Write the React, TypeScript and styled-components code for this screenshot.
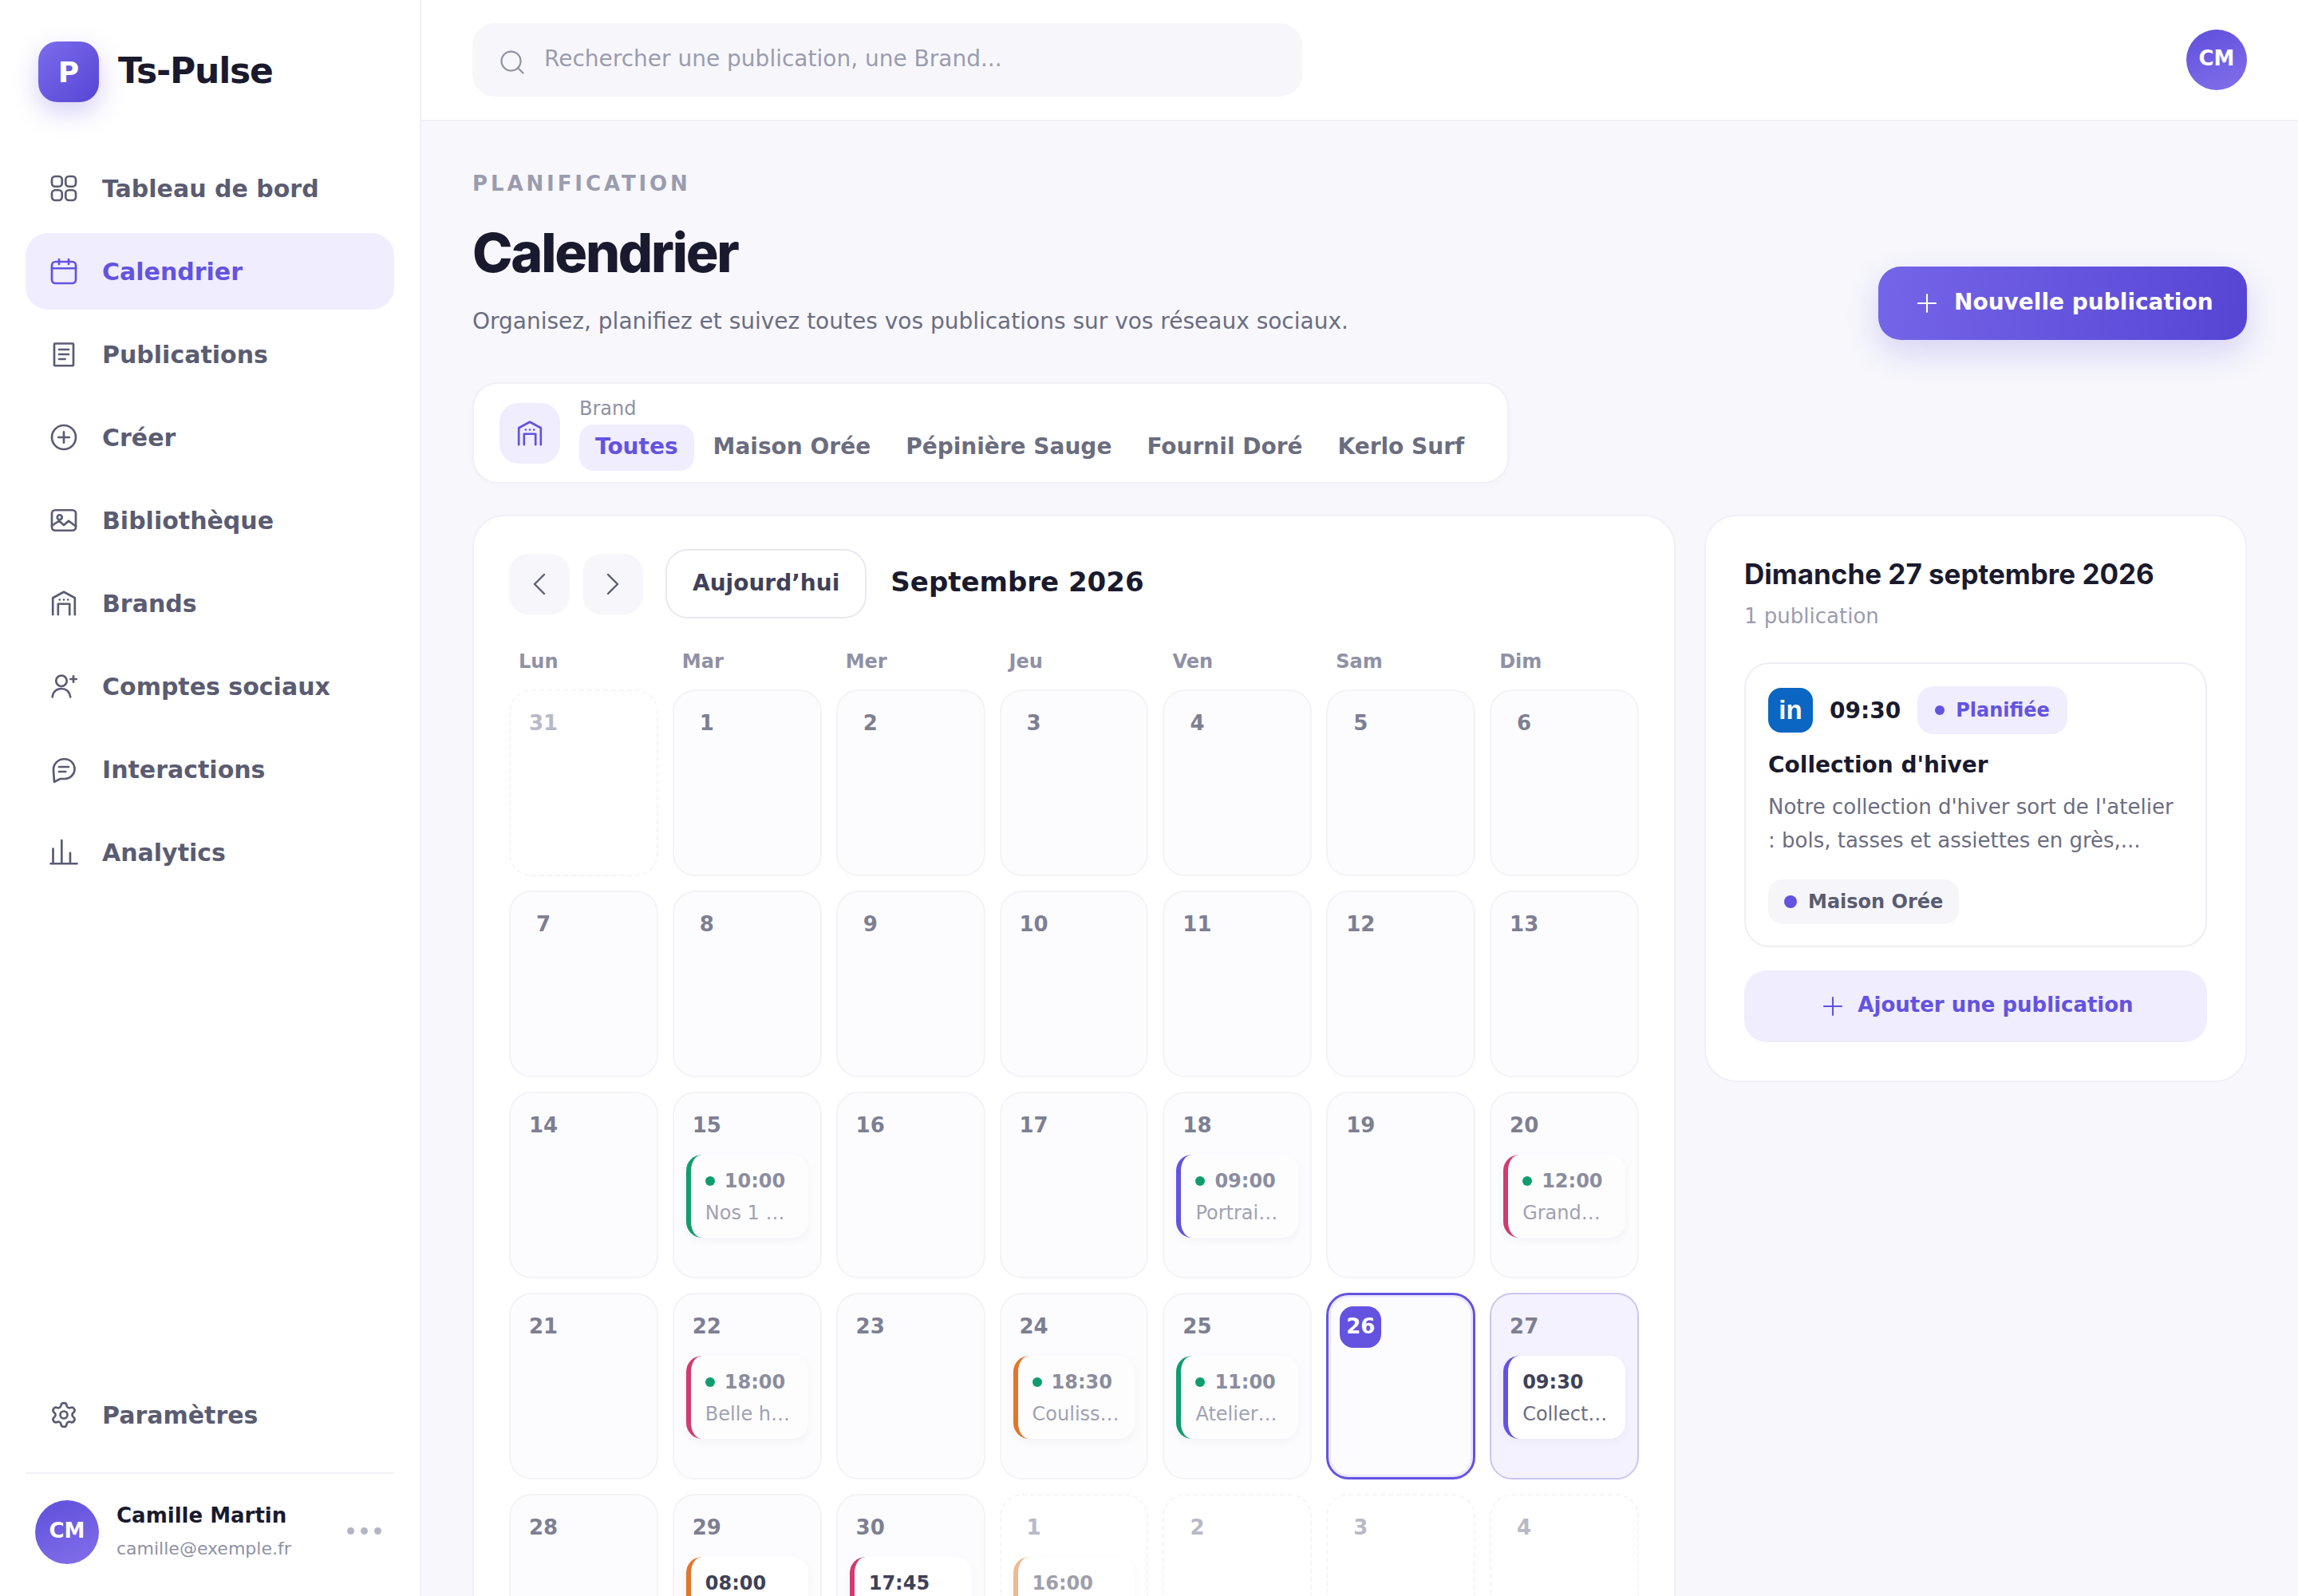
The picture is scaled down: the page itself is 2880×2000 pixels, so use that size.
import { ReactNode } from "react";
import styled, { createGlobalStyle } from "styled-components";
import { ChevronLeft, ChevronRight, Plus, Search, Settings } from "lucide-react";

const GlobalStyle = createGlobalStyle`
  html, body { margin: 0; padding: 0; background: #f7f7fc; }
  body { font-family: "DejaVu Sans", sans-serif; color: #1a1a2e; }
  * { box-sizing: border-box; }
`;

const Shell = styled.div`
  display: flex;
  width: 2880px;
  height: 2000px;
  overflow: hidden;
`;

const Sidebar = styled.aside`
  display: flex;
  flex-direction: column;
  flex: 0 0 528px;
  height: 2000px;
  padding: 52px 32px 40px;
  background: #fff;
  border-right: 2px solid #f0f0f7;
`;

const Brand = styled.div`
  display: flex;
  align-items: center;
  gap: 24px;
  padding-left: 16px;
  height: 76px;
  margin-bottom: 60px;
`;

const LogoMark = styled.div`
  display: flex;
  align-items: center;
  justify-content: center;
  width: 76px;
  height: 76px;
  border-radius: 24px;
  background: linear-gradient(135deg, #7c6cec, #5645d4);
  box-shadow: 0 12px 32px rgba(99, 83, 224, 0.28);
  color: #fff;
  font-size: 36px;
  font-weight: 700;
`;

const BrandName = styled.span`
  font-size: 44px;
  font-weight: 700;
  letter-spacing: -1.2px;
  margin-top: -3px;
`;

const NavList = styled.nav`
  display: flex;
  flex-direction: column;
  gap: 8px;
  flex: 1;
`;

const NavItem = styled.a<{ $active?: boolean }>`
  display: flex;
  align-items: center;
  gap: 30px;
  height: 96px;
  padding-left: 30px;
  border-radius: 28px;
  font-size: 30px;
  font-weight: 700;
  color: ${(p) => (p.$active ? "#6353e0" : "#5a5c72")};
  background: ${(p) => (p.$active ? "#f0edfe" : "transparent")};
`;

const Divider = styled.div`
  height: 2px;
  margin: 24px 0 33px;
  background: #f0f0f7;
`;

const UserRow = styled.div`
  display: flex;
  align-items: center;
  padding: 0 16px 0 12px;
  gap: 22px;
`;

const Avatar = styled.div<{ $size: number }>`
  display: flex;
  align-items: center;
  justify-content: center;
  flex: none;
  width: ${(p) => p.$size}px;
  height: ${(p) => p.$size}px;
  padding-bottom: 4px;
  border-radius: 50%;
  background: linear-gradient(160deg, #5f4fdb, #8270ea);
  color: #fff;
  font-size: 26px;
  font-weight: 700;
`;

const UserText = styled.div`
  display: flex;
  flex-direction: column;
  gap: 6px;
  flex: 1;
`;

const UserName = styled.div`
  font-size: 26px;
  font-weight: 700;
  line-height: 36px;
`;

const UserMail = styled.div`
  font-size: 22px;
  line-height: 36px;
  color: #8f91a5;
`;

const Dots = styled.div`
  display: flex;
  gap: 8px;
  margin-top: -4px;
  span {
    width: 9px;
    height: 9px;
    border-radius: 50%;
    background: #b4b5c4;
  }
`;

const Column = styled.div`
  display: flex;
  flex-direction: column;
  flex: 1;
  min-width: 0;
`;

const Topbar = styled.header`
  display: flex;
  align-items: center;
  justify-content: space-between;
  flex: none;
  height: 152px;
  padding: 0 64px;
  background: #fff;
  border-bottom: 2px solid #f0f0f7;
`;

const SearchBox = styled.label`
  display: flex;
  align-items: center;
  gap: 22px;
  width: 1040px;
  height: 92px;
  padding-left: 32px;
  border-radius: 28px;
  background: #f7f7fb;
  color: #8f91a5;
  svg {
    margin-top: 6px;
  }
`;

const SearchInput = styled.input`
  flex: 1;
  border: 0;
  outline: 0;
  padding: 0;
  background: transparent;
  font-family: inherit;
  font-size: 28px;
  margin-top: -4px;
  &::placeholder {
    color: #9a9cae;
    opacity: 1;
  }
`;

const Main = styled.main`
  padding: 60px 64px 0;
`;

const Head = styled.div`
  display: flex;
  align-items: flex-end;
  justify-content: space-between;
`;

const Eyebrow = styled.div`
  font-size: 26px;
  line-height: 36px;
  font-weight: 700;
  letter-spacing: 3.9px;
  color: #9a9cae;
`;

const Title = styled.h1`
  margin: 28px 0 24px;
  font-family: Inter, sans-serif;
  font-size: 68px;
  line-height: 80px;
  font-weight: 800;
  letter-spacing: -2.2px;
`;

const Subtitle = styled.p`
  margin: 0;
  font-size: 28px;
  line-height: 46px;
  color: #6b6d80;
`;

const PrimaryButton = styled.button`
  display: flex;
  align-items: center;
  gap: 15px;
  width: 462px;
  height: 92px;
  padding: 0 0 0 42px;
  border: 0;
  border-radius: 28px;
  background: linear-gradient(100deg, #7565e8, #5645d4);
  box-shadow: 0 16px 40px rgba(99, 83, 224, 0.22);
  color: #fff;
  font-family: inherit;
  font-size: 28px;
  font-weight: 700;
  span {
    margin-top: -4px;
  }
`;

const FilterBar = styled.div`
  display: inline-flex;
  align-items: center;
  gap: 24px;
  margin-top: 53px;
  padding: 15px 34px 14px 32px;
  background: #fff;
  border: 2px solid #f0f0f7;
  border-radius: 32px;
  box-shadow: 0 2px 8px rgba(26, 26, 46, 0.02);
`;

const FilterIcon = styled.div`
  display: flex;
  align-items: center;
  justify-content: center;
  width: 76px;
  height: 76px;
  border-radius: 24px;
  background: #f0edfe;
  color: #6353e0;
`;

const FilterLabel = styled.div`
  font-size: 24px;
  line-height: 32px;
  color: #8f91a5;
  margin-bottom: 4px;
`;

const FilterTabs = styled.div`
  display: flex;
  gap: 4px;
`;

const FilterTab = styled.span<{ $active?: boolean }>`
  display: flex;
  align-items: center;
  height: 58px;
  padding: 0 20px 3px;
  border-radius: 18px;
  font-size: 28px;
  font-weight: 700;
  color: ${(p) => (p.$active ? "#6353e0" : "#6b6d80")};
  background: ${(p) => (p.$active ? "#f0edfe" : "transparent")};
`;

const Content = styled.div`
  display: grid;
  grid-template-columns: 1508px 680px;
  gap: 36px;
  align-items: start;
  margin-top: 39px;
`;

const CalendarCard = styled.section`
  height: 1500px;
  padding: 41px 44px 39px;
  background: #fff;
  border: 2px solid #f0f0f7;
  border-radius: 40px;
`;

const CalendarToolbar = styled.div`
  display: flex;
  align-items: center;
  gap: 16px;
  height: 87px;
`;

const NavButton = styled.button`
  display: flex;
  align-items: center;
  justify-content: center;
  width: 76px;
  height: 76px;
  padding: 0;
  border: 0;
  border-radius: 24px;
  background: #f7f7fb;
  color: #5a5c72;
`;

const TodayButton = styled.button`
  height: 87px;
  margin-left: 12px;
  padding: 0 32px 3px;
  border: 2px solid #e8e8f0;
  border-radius: 28px;
  background: #fff;
  color: #3f4158;
  font-family: inherit;
  font-size: 28px;
  font-weight: 700;
`;

const MonthTitle = styled.h2`
  margin: -6px 0 0 14px;
  font-size: 34px;
  font-weight: 700;
`;

const WeekGrid = styled.div`
  display: grid;
  grid-template-columns: repeat(7, minmax(0, 1fr));
  column-gap: 18px;
  margin: 36px 0 17px;
`;

const WeekDay = styled.div`
  padding-left: 12px;
  font-size: 24px;
  line-height: 36px;
  font-weight: 700;
  color: #8f91a5;
`;

const DayGrid = styled.div`
  display: grid;
  grid-template-columns: repeat(7, minmax(0, 1fr));
  grid-auto-rows: 234px;
  gap: 18px;
`;

type CellKind = "normal" | "outside" | "today" | "selected";

const cellBorder: Record<CellKind, string> = {
  normal: "2px solid #f3f3f8",
  outside: "2px dashed #f6f6f9",
  today: "3px solid #6353e0",
  selected: "2px solid #cbc5f2",
};

const cellBg: Record<CellKind, string> = {
  normal: "#fcfcfe",
  outside: "#fff",
  today: "#fcfcfe",
  selected: "#f4f2fe",
};

const Cell = styled.div<{ $kind: CellKind }>`
  min-width: 0;
  padding: ${(p) => (p.$kind === "today" ? "14px" : "15px")};
  border: ${(p) => cellBorder[p.$kind]};
  border-radius: 28px;
  background: ${(p) => cellBg[p.$kind]};
  box-shadow: ${(p) =>
    p.$kind === "today" ? "inset 0 0 0 3px #ece9fc" : "none"};
`;

const DayNumber = styled.div<{ $kind: CellKind }>`
  display: flex;
  align-items: center;
  justify-content: center;
  width: 52px;
  height: 52px;
  margin-bottom: 10px;
  padding-bottom: 2px;
  border-radius: 17px;
  font-size: 26px;
  font-weight: 700;
  color: ${(p) =>
    p.$kind === "today" ? "#fff" : p.$kind === "outside" ? "#b8b9c7" : "#7d7f93"};
  background: ${(p) => (p.$kind === "today" ? "#6353e0" : "transparent")};
`;

type EventState = "done" | "planned" | "faded" | "active";

const EventCard = styled.div<{ $color: string; $state: EventState }>`
  height: 104px;
  padding: 13px 18px 11px;
  border-left: 6px solid ${(p) => p.$color};
  border-radius: 20px;
  background: ${(p) => (p.$state === "done" ? "#fdfdfe" : "#fff")};
  box-shadow: 0 4px 12px rgba(26, 26, 46, 0.04);
  opacity: ${(p) => (p.$state === "faded" ? 0.5 : 1)};
`;

const EventTime = styled.div<{ $state: EventState }>`
  display: flex;
  align-items: center;
  gap: 12px;
  font-size: 24px;
  line-height: 40px;
  font-weight: 700;
  color: ${(p) => (p.$state === "done" ? "#8b8d9f" : "#3f4158")};
`;

const GreenDot = styled.span`
  width: 12px;
  height: 12px;
  border-radius: 50%;
  background: #0f9d6e;
`;

const EventTitle = styled.div<{ $state: EventState }>`
  font-size: 24px;
  line-height: 40px;
  color: ${(p) => (p.$state === "done" ? "#a0a2b2" : "#6b6d80")};
  white-space: nowrap;
  overflow: hidden;
  text-overflow: ellipsis;
`;

const SidePanel = styled.aside`
  padding: 50px 48px 48px;
  background: #fff;
  border: 2px solid #f0f0f7;
  border-radius: 40px;
`;

const PanelTitle = styled.h3`
  margin: 0;
  font-family: Inter, sans-serif;
  font-size: 35px;
  line-height: 44px;
  font-weight: 700;
`;

const PanelCount = styled.div`
  margin: 11px 0 38px;
  font-size: 26px;
  line-height: 40px;
  color: #9a9cae;
`;

const PostCard = styled.article`
  padding: 28px 28px 27px;
  border: 2px solid #eeeef4;
  border-radius: 32px;
`;

const PostMeta = styled.div`
  display: flex;
  align-items: center;
  height: 60px;
`;

const LinkedinBadge = styled.div`
  display: flex;
  align-items: center;
  justify-content: center;
  width: 56px;
  height: 56px;
  border-radius: 16px;
  background: #0a66c2;
  color: #fff;
  font-family: "Liberation Sans", sans-serif;
  font-size: 33px;
  font-weight: 700;
`;

const PostTime = styled.span`
  margin: 0 21px;
  font-size: 28px;
  font-weight: 700;
`;

const StatusPill = styled.span`
  display: flex;
  align-items: center;
  gap: 14px;
  height: 60px;
  padding: 0 22px;
  border-radius: 20px;
  background: #f0edfe;
  color: #6353e0;
  font-size: 24px;
  font-weight: 700;
  &::before {
    content: "";
    width: 12px;
    height: 12px;
    border-radius: 50%;
    background: #6353e0;
  }
`;

const PostTitle = styled.div`
  margin-top: 17px;
  font-size: 28px;
  line-height: 44px;
  font-weight: 700;
`;

const PostBody = styled.p`
  margin: 9px 0 28px;
  font-size: 26px;
  line-height: 42px;
  color: #6b6d80;
`;

const BrandChip = styled.div`
  display: flex;
  align-items: center;
  gap: 14px;
  width: fit-content;
  height: 56px;
  padding: 0 20px;
  border-radius: 18px;
  background: #f6f6fa;
  color: #5a5c72;
  font-size: 24px;
  font-weight: 700;
  &::before {
    content: "";
    width: 16px;
    height: 16px;
    border-radius: 50%;
    background: #6353e0;
  }
`;

const AddButton = styled.button`
  display: flex;
  align-items: center;
  justify-content: center;
  gap: 12px;
  width: 100%;
  height: 90px;
  margin-top: 29px;
  border: 0;
  border-radius: 28px;
  background: #f0edfe;
  color: #6353e0;
  font-family: inherit;
  font-size: 26px;
  font-weight: 700;
  span {
    margin-top: -4px;
  }
`;

function Icon({ children, size = 36 }: { children: ReactNode; size?: number }) {
  return (
    <svg
      width={size}
      height={size}
      viewBox="0 0 24 24"
      fill="none"
      stroke="currentColor"
      strokeWidth="1.8"
      strokeLinecap="round"
      strokeLinejoin="round"
    >
      {children}
    </svg>
  );
}

const GridIcon = () => (
  <Icon>
    <rect x="2" y="2" width="8.500" height="8.500" rx="2.800" />
    <rect x="13.500" y="2" width="8.500" height="8.500" rx="2.800" />
    <rect x="2" y="13.500" width="8.500" height="8.500" rx="2.800" />
    <rect x="13.500" y="13.500" width="8.500" height="8.500" rx="2.800" />
  </Icon>
);

const CalendarIcon = () => (
  <Icon>
    <rect x="2" y="4" width="20" height="18" rx="3" />
    <path d="M2 9.500h20M8 2v4M16 2v4" />
  </Icon>
);

const DocIcon = () => (
  <Icon>
    <rect x="4" y="3" width="16" height="18.500" rx="0.600" />
    <path d="M8 8h8M8 12h8M8 16h5" />
  </Icon>
);

const PlusCircleIcon = () => (
  <Icon>
    <circle cx="12" cy="12" r="10" />
    <path d="M12 7.500v9M7.500 12h9" />
  </Icon>
);

const ImageIcon = () => (
  <Icon>
    <rect x="2" y="3.500" width="20" height="17" rx="2.800" />
    <circle cx="8.500" cy="9.500" r="2" />
    <path d="M2 16.500 8 12.500l4 3.500 4-3.500 6 4.500" />
  </Icon>
);

const StoreIcon = ({ size = 36 }: { size?: number }) => (
  <Icon size={size}>
    <path d="M2.800 21.500V7.500L12 2.500l9.200 5V21.500" />
    <path d="M7.200 21.500v-9h9.600v9" />
    <path d="M8.500 9h.01M12 9h.01M15.500 9h.01" />
  </Icon>
);

const UserPlusIcon = () => (
  <Icon>
    <circle cx="10" cy="7.500" r="4.500" />
    <path d="M2.500 21c.3-4.200 3.200-7 7.500-7s6.700 2.800 7.500 7" />
    <path d="M20 3.500v5M17.500 6h5" />
  </Icon>
);

const ChatIcon = () => (
  <Icon>
    <path d="M3.300 12.500a8.800 8.800 0 0 1 9-9h.5c4.500 0 8.200 3.700 8.200 8.200s-3.700 8.300-8.200 8.300H9l-5 2.500z" />
    <path d="M8 10h8M8 14h5.500" />
  </Icon>
);

const BarsIcon = () => (
  <Icon>
    <path d="M1 21.500h22M3 21.500V9M10.200 21.500V2M17.300 21.500v-9" />
  </Icon>
);

const navItems = [
  { label: "Tableau de bord", icon: <GridIcon /> },
  { label: "Calendrier", icon: <CalendarIcon />, active: true },
  { label: "Publications", icon: <DocIcon /> },
  { label: "Créer", icon: <PlusCircleIcon /> },
  { label: "Bibliothèque", icon: <ImageIcon /> },
  { label: "Brands", icon: <StoreIcon /> },
  { label: "Comptes sociaux", icon: <UserPlusIcon /> },
  { label: "Interactions", icon: <ChatIcon /> },
  { label: "Analytics", icon: <BarsIcon /> },
];

const VIOLET = "#6353e0";
const GREEN = "#0f9d6e";
const PINK = "#d13b6f";
const ORANGE = "#e0762b";

interface CalEvent {
  time: string;
  title: string;
  color: string;
  state: EventState;
}

interface Day {
  n: number;
  kind?: CellKind;
  event?: CalEvent;
}

const done = (time: string, title: string, color: string): CalEvent => ({
  time,
  title,
  color,
  state: "done",
});

const days: Day[] = [
  { n: 31, kind: "outside" },
  ...[1, 2, 3, 4, 5, 6, 7, 8, 9, 10, 11, 12, 13, 14].map((n) => ({ n })),
  { n: 15, event: done("10:00", "Nos 1 000 abonnés", GREEN) },
  { n: 16 },
  { n: 17 },
  { n: 18, event: done("09:00", "Portrait d'artisan", VIOLET) },
  { n: 19 },
  { n: 20, event: done("12:00", "Grandes marées", PINK) },
  { n: 21 },
  { n: 22, event: done("18:00", "Belle histoire", PINK) },
  { n: 23 },
  { n: 24, event: done("18:30", "Coulisses du four", ORANGE) },
  { n: 25, event: done("11:00", "Ateliers ouverts", GREEN) },
  { n: 26, kind: "today" },
  {
    n: 27,
    kind: "selected",
    event: { time: "09:30", title: "Collection d'hiver", color: VIOLET, state: "active" },
  },
  { n: 28 },
  { n: 29, event: { time: "08:00", title: "Matinale", color: ORANGE, state: "planned" } },
  { n: 30, event: { time: "17:45", title: "Bouquet", color: PINK, state: "planned" } },
  {
    n: 1,
    kind: "outside",
    event: { time: "16:00", title: "Automne", color: ORANGE, state: "faded" },
  },
  { n: 2, kind: "outside" },
  { n: 3, kind: "outside" },
  { n: 4, kind: "outside" },
];

const weekDays = ["Lun", "Mar", "Mer", "Jeu", "Ven", "Sam", "Dim"];
const brands = ["Toutes", "Maison Orée", "Pépinière Sauge", "Fournil Doré", "Kerlo Surf"];

export default function App() {
  return (
    <Shell>
      <GlobalStyle />
      <Sidebar>
        <Brand>
          <LogoMark>P</LogoMark>
          <BrandName>Ts-Pulse</BrandName>
        </Brand>
        <NavList>
          {navItems.map((item) => (
            <NavItem key={item.label} $active={item.active}>
              {item.icon}
              {item.label}
            </NavItem>
          ))}
        </NavList>
        <NavItem>
          <Settings size={36} strokeWidth={1.8} />
          Paramètres
        </NavItem>
        <Divider />
        <UserRow>
          <Avatar $size={80}>CM</Avatar>
          <UserText>
            <UserName>Camille Martin</UserName>
            <UserMail>camille@exemple.fr</UserMail>
          </UserText>
          <Dots>
            <span />
            <span />
            <span />
          </Dots>
        </UserRow>
      </Sidebar>
      <Column>
        <Topbar>
          <SearchBox>
            <Search size={36} strokeWidth={1.5} />
            <SearchInput placeholder="Rechercher une publication, une Brand..." />
          </SearchBox>
          <Avatar $size={76}>CM</Avatar>
        </Topbar>
        <Main>
          <Head>
            <div>
              <Eyebrow>PLANIFICATION</Eyebrow>
              <Title>Calendrier</Title>
              <Subtitle>
                Organisez, planifiez et suivez toutes vos publications sur vos réseaux sociaux.
              </Subtitle>
            </div>
            <PrimaryButton>
              <Plus size={38} strokeWidth={1.3} />
              <span>Nouvelle publication</span>
            </PrimaryButton>
          </Head>
          <FilterBar>
            <FilterIcon>
              <StoreIcon size={36} />
            </FilterIcon>
            <div>
              <FilterLabel>Brand</FilterLabel>
              <FilterTabs>
                {brands.map((b, i) => (
                  <FilterTab key={b} $active={i === 0}>
                    {b}
                  </FilterTab>
                ))}
              </FilterTabs>
            </div>
          </FilterBar>
          <Content>
            <CalendarCard>
              <CalendarToolbar>
                <NavButton>
                  <ChevronLeft size={48} strokeWidth={1.2} />
                </NavButton>
                <NavButton>
                  <ChevronRight size={48} strokeWidth={1.2} />
                </NavButton>
                <TodayButton>Aujourd’hui</TodayButton>
                <MonthTitle>Septembre 2026</MonthTitle>
              </CalendarToolbar>
              <WeekGrid>
                {weekDays.map((d) => (
                  <WeekDay key={d}>{d}</WeekDay>
                ))}
              </WeekGrid>
              <DayGrid>
                {days.map((d, i) => {
                  const kind = d.kind ?? "normal";
                  return (
                    <Cell key={i} $kind={kind}>
                      <DayNumber $kind={kind}>{d.n}</DayNumber>
                      {d.event && (
                        <EventCard $color={d.event.color} $state={d.event.state}>
                          <EventTime $state={d.event.state}>
                            {d.event.state === "done" && <GreenDot />}
                            {d.event.time}
                          </EventTime>
                          <EventTitle $state={d.event.state}>{d.event.title}</EventTitle>
                        </EventCard>
                      )}
                    </Cell>
                  );
                })}
              </DayGrid>
            </CalendarCard>
            <SidePanel>
              <PanelTitle>Dimanche 27 septembre 2026</PanelTitle>
              <PanelCount>1 publication</PanelCount>
              <PostCard>
                <PostMeta>
                  <LinkedinBadge>in</LinkedinBadge>
                  <PostTime>09:30</PostTime>
                  <StatusPill>Planifiée</StatusPill>
                </PostMeta>
                <PostTitle>Collection d'hiver</PostTitle>
                <PostBody>
                  Notre collection d'hiver sort de l'atelier : bols, tasses et assiettes en grès,...
                </PostBody>
                <BrandChip>Maison Orée</BrandChip>
              </PostCard>
              <AddButton>
                <Plus size={38} strokeWidth={1.3} />
                <span>Ajouter une publication</span>
              </AddButton>
            </SidePanel>
          </Content>
        </Main>
      </Column>
    </Shell>
  );
}
